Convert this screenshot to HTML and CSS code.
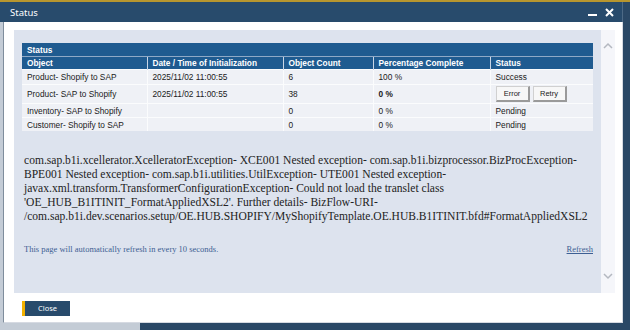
FILE: index.html
```html
<!DOCTYPE html>
<html>
<head>
<meta charset="utf-8">
<link rel="stylesheet" href="styles.css">
</head>
<body>
<div class="desk">
  <div class="backwin"></div>
  <div class="topline"></div>
  <div class="dialog">
    <div class="titlebar">
      <span class="title">Status</span>
      <div class="ctrls">
        <svg class="min" width="9" height="9" viewBox="0 0 9 9"><rect x="0" y="6" width="9" height="2" fill="#fff"/></svg>
        <svg class="close-x" width="9" height="9" viewBox="0 0 9 9"><path d="M1 1L8 8M8 1L1 8" stroke="#fff" stroke-width="2"/></svg>
      </div>
    </div>
    <div class="body">
      <div class="content-row">
        <div class="panel">
          <table class="grid">
            <colgroup>
              <col class="c1"><col class="c2"><col class="c3"><col class="c4"><col class="c5">
            </colgroup>
            <tr class="cap"><th colspan="5">Status</th></tr>
            <tr class="head">
              <th>Object</th><th>Date / Time of Initialization</th><th>Object Count</th><th>Percentage Complete</th><th>Status</th>
            </tr>
            <tr class="r1"><td>Product- Shopify to SAP</td><td>2025/11/02 11:00:55</td><td>6</td><td>100 %</td><td>Success</td></tr>
            <tr class="r2"><td>Product- SAP to Shopify</td><td>2025/11/02 11:00:55</td><td>38</td><td class="b">0 %</td><td><span class="btns"><button class="mini">Error</button><button class="mini">Retry</button></span></td></tr>
            <tr class="r3"><td>Inventory- SAP to Shopify</td><td></td><td>0</td><td>0 %</td><td>Pending</td></tr>
            <tr class="r3"><td>Customer- Shopify to SAP</td><td></td><td>0</td><td>0 %</td><td>Pending</td></tr>
          </table>
          <div class="error">com.sap.b1i.xcellerator.XcelleratorException- XCE001 Nested exception- com.sap.b1i.bizprocessor.BizProcException-<br>BPE001 Nested exception- com.sap.b1i.utilities.UtilException- UTE001 Nested exception-<br>javax.xml.transform.TransformerConfigurationException- Could not load the translet class<br>'OE_HUB_B1ITINIT_FormatAppliedXSL2'. Further details- BizFlow-URI-<br>/com.sap.b1i.dev.scenarios.setup/OE.HUB.SHOPIFY/MyShopifyTemplate.OE.HUB.B1ITINIT.bfd#FormatAppliedXSL2</div>
          <div class="foot">
            <span>This page will automatically refresh in every 10 seconds.</span>
            <a class="refresh" href="#">Refresh</a>
          </div>
        </div>
        <div class="scroll">
          <svg width="10" height="7" viewBox="0 0 10 7"><path d="M1 6L5 2L9 6" fill="none" stroke="#b4b8c0" stroke-width="1.5"/></svg>
          <svg width="10" height="7" viewBox="0 0 10 7"><path d="M1 1L5 5L9 1" fill="none" stroke="#b4b8c0" stroke-width="1.5"/></svg>
        </div>
      </div>
      <div class="actions"><button class="closebtn">Close</button></div>
    </div>
  </div>
</div>
</body>
</html>
```
FILE: styles.css
```css
html, body { margin: 0; padding: 0; }
body { width: 630px; height: 330px; overflow: hidden; }

.desk {
  position: relative;
  width: 630px;
  height: 330px;
  background: #2a4866;
  font-family: "Liberation Sans", Arial, sans-serif;
}
.backwin {
  position: absolute;
  left: 0; top: 0;
  width: 140px; height: 330px;
  background: #c4ccd6;
}
.topline {
  position: absolute;
  left: 0; top: 0;
  width: 630px; height: 2px;
  background: #b8962e;
}
.dialog {
  position: absolute;
  left: 0; top: 2px;
  width: 623px; height: 321px;
  display: flex;
  flex-direction: column;
}
.titlebar {
  height: 20px;
  background: #284b6c;
  display: flex;
  align-items: center;
  justify-content: space-between;
  padding: 0 8px 0 10px;
  border-right: 1px solid #4d6a86;
}
.title {
  color: #fff;
  font-family: "Noto Sans", "Open Sans", sans-serif;
  font-size: 9.5px;
}
.ctrls { display: flex; gap: 8px; align-items: center; }
.body {
  flex: 1;
  margin-left: 3px;
  background: #fff;
  border-left: 1px solid #7f8d9c;
  border-right: 1px solid #d6dae2;
  border-bottom: 1px solid #d6dae2;
}
.content-row {
  display: flex;
  margin: 8px 0 0 10px;
}
.panel {
  width: 571px;
  height: 250px;
  background: #dde3ee;
  padding: 13px 8px 0 8px;
}
.scroll {
  width: 14px;
  height: 263px;
  background: #f5f6fa;
  display: flex;
  flex-direction: column;
  justify-content: space-between;
  align-items: center;
  padding: 12px 0 13px;
  box-sizing: border-box;
}

.grid {
  width: 571px;
  border-collapse: collapse;
  table-layout: fixed;
  font-size: 8.3px;
  color: #1a1a1a;
}
.c1 { width: 125px; }
.c2 { width: 136px; }
.c3 { width: 90px; }
.c4 { width: 117px; }
.c5 { width: 103px; }
.grid th, .grid td {
  padding: 0 5px;
  text-align: left;
  white-space: nowrap;
}
.grid th { color: #fff; font-weight: bold; background: #1f5b90; }
.cap th { height: 13px; border-bottom: 1px solid #8fa9c6; }
.head th { height: 12px; border-left: 1px solid #c9d6e6; }
.head th:first-child { border-left: none; }
.grid td {
  background: #eff1f6;
  border-top: 1px solid #fbfcfd;
  border-left: 1px solid #fbfcfd;
}
.grid td:first-child { border-left: none; }
.r1 td { height: 14px; }
.r2 td { height: 18px; }
.r3 td { height: 13px; }
.b { font-weight: bold; }
.btns { display: flex; gap: 3px; }
.mini {
  width: 34px;
  height: 16px;
  padding: 0;
  font-family: "Liberation Sans", Arial, sans-serif;
  font-size: 7.5px;
  color: #222;
  background: #f7f7f7;
  border: 1px solid #d0d0d0;
  border-right: 2px solid #9a9a9a;
  border-bottom: 2px solid #9a9a9a;
}

.error {
  margin: 22px 0 0 2px;
  font-family: "Liberation Serif", "Times New Roman", serif;
  font-size: 11.55px;
  line-height: 14px;
  color: #222;
  white-space: nowrap;
}
.foot {
  margin: 21px 0 0 2px;
  display: flex;
  justify-content: space-between;
  align-items: center;
  font-family: "Liberation Serif", "Times New Roman", serif;
  font-size: 8.5px;
  color: #3d5f93;
}
.refresh { color: #3d5f93; text-decoration: underline; }

.actions { padding: 4px 0 0 18px; }
.closebtn {
  width: 48px;
  height: 15px;
  padding: 0;
  background: #284b6c;
  color: #fff;
  border: none;
  border-left: 3px solid #f2b100;
  font-family: "Noto Sans", "Open Sans", sans-serif;
  font-size: 7.5px;
}
```
